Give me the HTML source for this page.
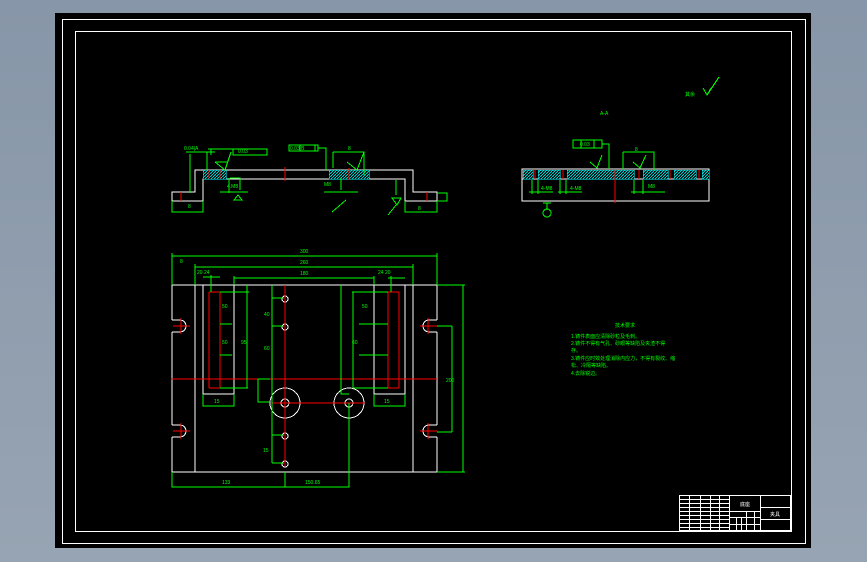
<!DOCTYPE html>
<html><head><meta charset="utf-8"><style>
html,body{margin:0;padding:0;width:867px;height:562px;overflow:hidden;background:linear-gradient(#8796a8,#97a4b3);}
svg{position:absolute;left:0;top:0}
text{font-family:"Liberation Sans","Noto Sans CJK SC",sans-serif;fill:#0f0;}
</style></head><body>
<svg width="867" height="562" viewBox="0 0 867 562" shape-rendering="crispEdges">
<defs><pattern id="h" width="3" height="3" patternUnits="userSpaceOnUse"><rect width="3" height="3" fill="#000"/><path d="M0 3L3 0" stroke="#0cc" stroke-width="1"/></pattern></defs>
<rect x="55" y="13" width="756" height="535" fill="#000"/>
<rect x="62.5" y="19.5" width="743" height="524" fill="none" stroke="#fff"/>
<rect x="75.5" y="31.5" width="716" height="500" fill="none" stroke="#fff"/>

<!-- Section A-A left -->
<g fill="none" stroke="#fff">
<path d="M172 192H195V170H413V192H437V201H405V179H203V201H172Z"/>
</g>
<g fill="url(#h)" stroke="#0ff" stroke-width="0.5">
<rect x="203" y="170" width="23" height="9"/><rect x="329" y="170" width="40" height="9"/>
</g>
<g stroke="#f00"><path d="M181 192V201M209 170V179M220 170V179M285 167V181M349 168V180M427 192V201"/></g>
<g stroke="#0f0" fill="none">
<path d="M172 201V212H203V201M405 201V212H437V201M437 193H447V201H437"/>
<path d="M186 152H215M207 152V170M208 149H267V155H233V149M211 149V155M190 154V193M215 162L225 170L231 152M215 162H228"/>
<path d="M220 192H248M230 178H240V190M229 178V193M234 200L238 195L242 200Z"/>
<path d="M289 145H318V151H289ZM318 148H326V170M300 145V151M315 145V151"/>
<path d="M333 152H364V175M333 152V168M347 162L357 170L364 152M324 192H358M341 178V190M346 200L332 212"/>
<path d="M396 180V195M392 198L397 205L401 198ZM396 205L388 215"/>
</g>
<g font-size="5"><text x="184" y="150">0.04|A</text><text x="188" y="208">8</text><text x="418" y="210">8</text><text x="238" y="153">0.03</text><text x="290" y="150">0.03 B</text><text x="348" y="150">8</text><text x="227" y="188">4.M8</text><text x="324" y="186">M8</text></g>

<!-- Section B right -->
<g fill="none" stroke="#fff"><rect x="522" y="169" width="187" height="32"/><path d="M522 179H709"/></g>
<g fill="url(#h)" stroke="#0ff" stroke-width="0.5">
<rect x="523" y="170" width="10" height="9"/><rect x="538" y="170" width="22" height="9"/><rect x="567" y="170" width="67" height="9"/><rect x="643" y="170" width="25" height="9"/><rect x="674" y="170" width="22" height="9"/><rect x="702" y="170" width="7" height="9"/></g>
<g stroke="#f00"><path d="M535 170V179M563 170V179M615 170V203M639 170V179M670 170V179M699 170V179"/></g>
<g fill="none" stroke="#0f0">
<path d="M573 140H602V148H573ZM581 140V148M594 140V148M602 144H609V169"/>
<path d="M623 152H654V170M623 152V169M590 162L597 168L602 155M633 162L640 168L646 155"/>
<path d="M532 180V194M538 180V194M529 192H553M560 180V194M566 180V194M558 192H582M634 180V194M643 180V194M631 192H665"/>
<path d="M543 203H551M547 203V210"/><circle cx="547" cy="213" r="4"/>
<path d="M703 88L707 95L711 88M707 95L719 77"/>
</g>
<g font-size="5"><text x="600" y="115">A-A</text><text x="685" y="96">其余</text><text x="580" y="146">0.03</text><text x="635" y="151">8</text><text x="541" y="190">4-M8</text><text x="570" y="190">4-M8</text><text x="648" y="188">M8</text></g>

<!-- Plan view -->
<g fill="none" stroke="#fff">
<path d="M172 285H437V320M437 332V425M437 437V472H172V437M172 425V332M172 320V285"/>
<path d="M172 320H180A6 6 0 0 1 180 332H172M172 425H180A6 6 0 0 1 180 437H172"/>
<path d="M437 320H429A6 6 0 0 0 429 332H437M437 425H429A6 6 0 0 0 429 437H437"/>
<path d="M195 285V472M413 285V472"/>
<path d="M203 285V394H234V285M374 285V394H405V285"/>
<circle cx="285" cy="403" r="15"/><circle cx="285" cy="403" r="4"/>
<circle cx="349" cy="403" r="15"/><circle cx="349" cy="403" r="4"/>
<circle cx="285" cy="299" r="3"/><circle cx="285" cy="327" r="3"/><circle cx="285" cy="436" r="3"/><circle cx="285" cy="464" r="3"/>
</g>
<g stroke="#f00">
<path d="M171 379H437M285 285V466M272 403H365M209 292V388M220 292V388M209 292H220M209 388H220M388 292V388M399 292V388M388 292H399M388 388H399M173 326H190M173 431H190M420 326H437M420 431H437M181 318V334M181 423V439M428 318V334M428 423V439"/>
</g>
<g fill="none" stroke="#0f0">
<path d="M172 256H437M172 253V285M437 253V285M195 267H413M195 264V285M413 264V285"/>
<path d="M203 277H220M211 275V292M234 278H374M234 276V285M374 276V285M388 278H405M391 276V292"/>
<path d="M220 292H249M220 324H232M220 355H232M220 388H248M247 285V388M272 285V463M272 298H284M272 326H284M272 435H284M272 463H284M258 379H270M258 379V402H270"/>
<path d="M341 285V394H349M352 292H388M353 292V388M359 324H388M359 355H388M353 388H388"/>
<path d="M203 394V406H234V394M374 394V406H405V394"/>
<path d="M172 472V487H349V403M285 472V487M437 285H465M437 472H465M463 285V472M437 326H452M437 432H452M452 326V432"/>
</g>
<g font-size="5"><text x="300" y="253">300</text><text x="180" y="263">8</text><text x="300" y="264">260</text><text x="197" y="274">20 24</text><text x="300" y="275">180</text><text x="378" y="274">24 20</text><text x="222" y="308">50</text><text x="222" y="344">50</text><text x="241" y="344">95</text><text x="264" y="316">40</text><text x="264" y="350">60</text><text x="352" y="344">60</text><text x="362" y="308">50</text><text x="214" y="403">15</text><text x="384" y="403">15</text><text x="222" y="484">133</text><text x="305" y="484">150.65</text><text x="446" y="382">200</text><text x="263" y="452">15</text></g>

<!-- Tech notes -->
<g font-size="5"><text x="615" y="327">技术要求</text>
<text x="571" y="338">1.铸件表面应清除砂粒及毛刺。</text>
<text x="571" y="345">2.铸件不得有气孔、砂眼等缺陷及夹渣不得</text>
<text x="571" y="352">存。</text>
<text x="571" y="360">3.铸件应时效处理消除内应力，不得有裂纹、缩</text>
<text x="571" y="367">松、冷隔等缺陷。</text>
<text x="571" y="375">4.去除锐边。</text></g>

<!-- Title block -->
<g fill="none" stroke="#fff">
<rect x="679.5" y="495.5" width="111" height="35"/>
<path d="M729.5 495V531M760.5 495V531M760 507.5H791M760 519.5H791M679 499.5H729M679 503.5H729M679 507.5H729M679 511.5H729M679 515.5H729M679 519.5H729M679 523.5H729M679 527.5H729M689.5 495V531M700.5 495V531M710.5 495V531M719.5 495V531M729 511.5H760M729 517.5H760M729 524.5H760M746.5 511V531M754.5 511V531M736.5 517V531M741.5 517V531"/>
</g>
<g font-size="5"><text x="740" y="506" style="fill:#fff">底座</text><text x="770" y="516" style="fill:#fff">夹具</text></g>
</svg>
</body></html>
